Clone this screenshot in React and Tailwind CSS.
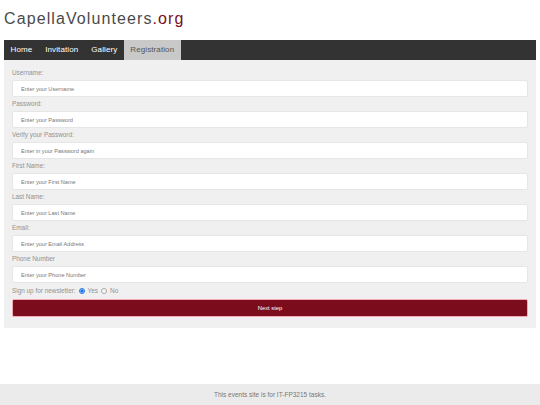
const fields = [
  { label: 'Username:', placeholder: 'Enter your Username', type: 'text' },
  { label: 'Password:', placeholder: 'Enter your Password', type: 'password' },
  { label: 'Verify your Password:', placeholder: 'Enter in your Password again', type: 'password' },
  { label: 'First Name:', placeholder: 'Enter your First Name', type: 'text' },
  { label: 'Last Name:', placeholder: 'Enter your Last Name', type: 'text' },
  { label: 'Email:', placeholder: 'Enter your Email Address', type: 'email' },
  { label: 'Phone Number', placeholder: 'Enter your Phone Number', type: 'tel' },
]

const tabs = ['Home', 'Invitation', 'Gallery', 'Registration']

export default function App() {
  return (
    <div className="flex min-h-[405px] flex-col bg-white font-['Liberation_Sans',Arial,sans-serif]">
      <header className="px-[4px] pt-[9px] pb-[11px]">
        <h1 className="text-[16px] leading-[20px] tracking-[1.1px] text-[#4a4a4a]">
          CapellaVolunteers<span className="text-[#7b0c1c]">.org</span>
        </h1>
      </header>

      <nav className="mx-[4px] flex h-[20px] bg-[#333]">
        {tabs.map((tab) => (
          <a
            key={tab}
            className={`flex items-center px-[6.5px] text-[8px] tracking-[0.1px] ${
              tab === 'Registration' ? 'bg-[#c9c9c9] text-[#555]' : 'text-white'
            }`}
          >
            {tab}
          </a>
        ))}
      </nav>

      <form className="mx-[4px] bg-[#f0f0f0] px-[8px] pt-[6px] pb-[11px]">
        {fields.map((field) => (
          <div key={field.label}>
            <label className="flex h-[14px] items-start pt-[3px] text-[6.4px] leading-[8px] text-[#929292]">
              {field.label}
            </label>
            <input
              type={field.type}
              placeholder={field.placeholder}
              className="block h-[17px] w-full rounded-[2px] border border-[#e6e6e6] bg-white px-[8px] text-[5.6px] placeholder:text-[#777] outline-none"
            />
          </div>
        ))}
        <div className="flex h-[16px] items-center gap-[3px] text-[6.4px] text-[#929292]">
          <span>Sign up for newsletter:</span>
          <input type="radio" name="news" defaultChecked className="m-0 h-[6px] w-[6px] accent-[#1a73e8]" />
          <span>Yes</span>
          <input type="radio" name="news" className="m-0 h-[6px] w-[6px] opacity-60" />
          <span>No</span>
        </div>
        <button
          type="button"
          className="block h-[18px] w-full rounded-[2px] border border-[#f3a9b3] bg-[#7b0c1c] text-[5.8px] text-white"
        >
          Next step
        </button>
      </form>

      <div className="flex-1" />

      <footer className="flex h-[21px] items-center justify-center bg-[#ebebeb] text-[6.5px] text-[#777]">
        This events site is for IT-FP3215 tasks.
      </footer>
    </div>
  )
}
